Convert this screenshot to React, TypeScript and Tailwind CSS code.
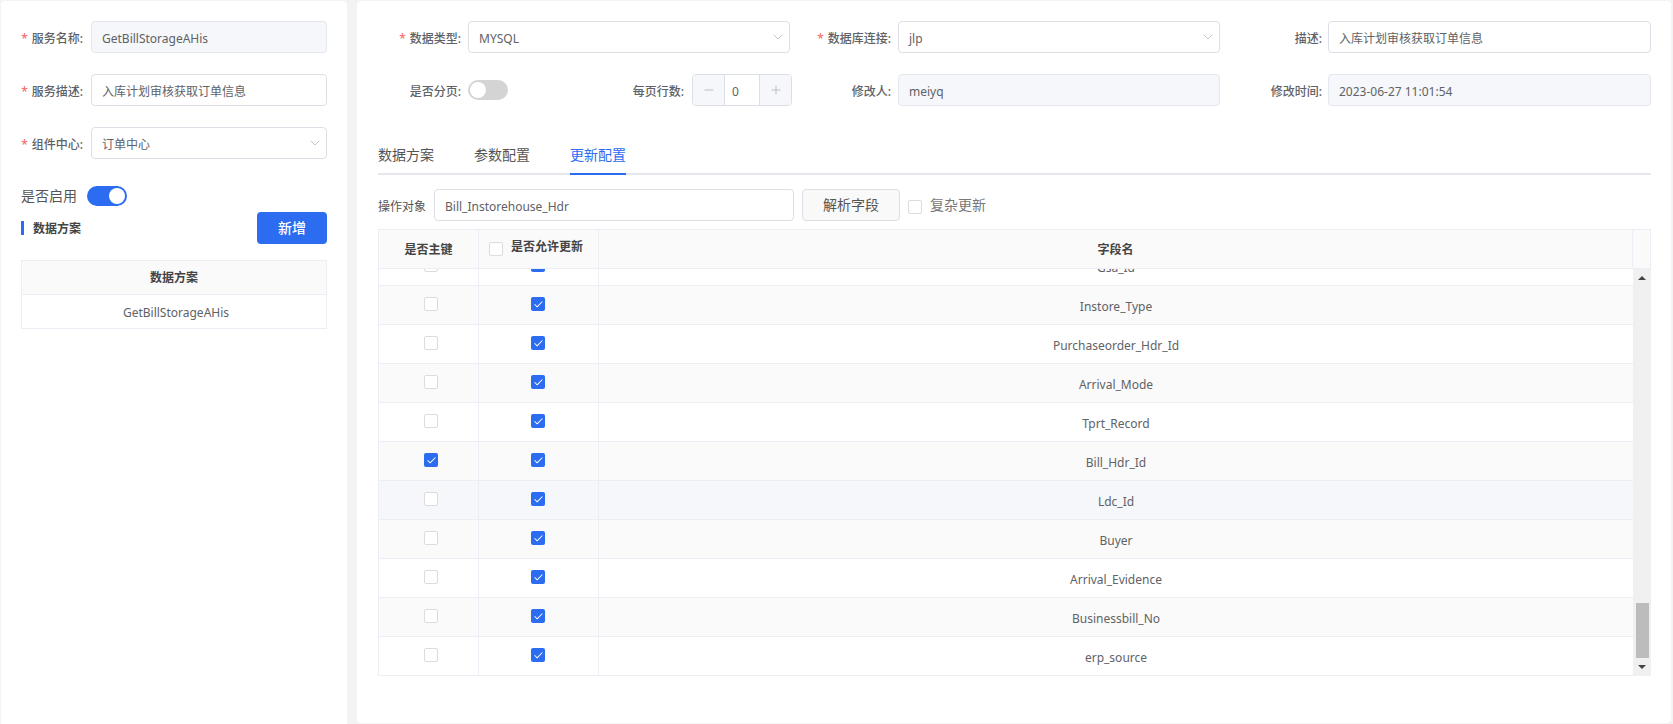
import React from 'react';
import { ChevronDown, Minus, Plus, Check } from 'lucide-react';

const rows = [
  { name: 'Gsa_Id', key: false },
  { name: 'Instore_Type', key: false },
  { name: 'Purchaseorder_Hdr_Id', key: false },
  { name: 'Arrival_Mode', key: false },
  { name: 'Tprt_Record', key: false },
  { name: 'Bill_Hdr_Id', key: true },
  { name: 'Ldc_Id', key: false },
  { name: 'Buyer', key: false },
  { name: 'Arrival_Evidence', key: false },
  { name: 'Businessbill_No', key: false },
  { name: 'erp_source', key: false },
];

function CheckBox({ checked }: { checked: boolean }) {
  if (checked) {
    return (
      <span className="flex h-[14px] w-[14px] items-center justify-center rounded-[2px] bg-[#2b6cf0]">
        <Check className="h-[11px] w-[11px] text-white" strokeWidth={2.2} />
      </span>
    );
  }
  return <span className="block h-[14px] w-[14px] rounded-[2px] border border-[#dcdcdc] bg-white" />;
}

function Label({ text, required, className }: { text: string; required?: boolean; className: string }) {
  return (
    <label className={`shrink-0 pt-[3px] text-right text-xs font-medium text-[#606266] ${className}`}>
      {required && <span className="mr-[4px] text-[#f56c6c]">*</span>}
      {text}:
    </label>
  );
}

function Field({ value, disabled, select, className }: { value: string; disabled?: boolean; select?: boolean; className: string }) {
  return (
    <div
      className={`flex h-8 items-center justify-between rounded border pl-[10px] pr-[3px] text-xs text-[#606266] ${
        disabled ? 'border-[#e4e7ed] bg-[#f5f7fa]' : 'border-[#dcdfe6] bg-white'
      } ${className}`}
    >
      <span className="pt-[3px]">{value}</span>
      {select && <ChevronDown className="h-4 w-4 text-[#b4b8bf]" strokeWidth={1.2} />}
    </div>
  );
}

function Toggle({ on }: { on: boolean }) {
  return (
    <span className={`flex h-5 w-10 items-center rounded-full px-[2px] ${on ? 'justify-end bg-[#2b6cf0]' : 'justify-start bg-[#d4d4d4]'}`}>
      <span className="block h-4 w-4 rounded-full bg-white" />
    </span>
  );
}

export default function App() {
  return (
    <div className="flex h-[724px] w-[1673px] gap-[10px] overflow-hidden bg-[#f3f3f4] pl-px pr-[2px] pt-px font-['Noto_Sans','Noto_Sans_CJK_SC',sans-serif]">
      {/* left panel */}
      <div className="h-[740px] w-[346px] shrink-0 rounded bg-white pl-5 pr-5 pt-5">
        <div className="flex flex-col gap-[21px]">
          <div className="flex items-center gap-2">
            <Label text="服务名称" required className="w-[62px]" />
            <Field value="GetBillStorageAHis" disabled className="w-[236px]" />
          </div>
          <div className="flex items-center gap-2">
            <Label text="服务描述" required className="w-[62px]" />
            <Field value="入库计划审核获取订单信息" className="w-[236px]" />
          </div>
          <div className="flex items-center gap-2">
            <Label text="组件中心" required className="w-[62px]" />
            <Field value="订单中心" select className="w-[236px]" />
          </div>
        </div>
        <div className="mt-[27px] flex items-center gap-[10px] text-sm text-[#555]">
          <span>是否启用</span>
          <Toggle on />
        </div>
        <div className="mt-[6px] flex items-center justify-between">
          <div className="border-l-[3px] border-[#2b6cf0] pl-[9px] text-xs font-semibold leading-[14px] text-[#444]">
            <span className="-mb-px mt-px block">数据方案</span>
          </div>
          <button className="h-8 w-[70px] rounded bg-[#2b6cf0] text-sm font-medium text-white">新增</button>
        </div>
        <div className="mt-4 w-[306px] border border-[#ebeef5] text-center text-xs">
          <div className="flex h-[34px] items-center justify-center border-b border-[#ebeef5] bg-[#fafafa] font-semibold text-[#444]">数据方案</div>
          <div className="flex h-[33px] items-center justify-center pl-[4px] pt-[2px] text-[#606266]">GetBillStorageAHis</div>
        </div>
      </div>

      {/* right panel */}
      <div className="h-[722px] w-[1314px] shrink-0 rounded bg-white pl-[21px] pr-5 pt-5">
        <div className="flex h-8 items-center">
          <Label text="数据类型" required className="w-[83px]" />
          <Field value="MYSQL" select className="ml-[7px] w-[322px]" />
          <Label text="数据库连接" required className="ml-[20px] w-[81px]" />
          <Field value="jlp" select className="ml-[7px] w-[322px]" />
          <Label text="描述" className="ml-[20px] w-[82px]" />
          <Field value="入库计划审核获取订单信息" className="ml-[6px] w-[323px]" />
        </div>
        <div className="mt-[21px] flex h-8 items-center">
          <Label text="是否分页" className="w-[83px]" />
          <div className="ml-[7px] w-[40px]"><Toggle on={false} /></div>
          <Label text="每页行数" className="ml-[117px] w-[59px]" />
          <div className="ml-[8px] flex h-8 w-[100px] items-stretch overflow-hidden rounded border border-[#dcdfe6] text-xs text-[#606266]">
            <span className="flex w-[32px] items-center justify-center border-r border-[#dcdfe6] bg-[#f5f7fa]"><Minus className="h-[14px] w-[14px] text-[#b4b8bf]" strokeWidth={1.5} /></span>
            <span className="flex flex-1 items-center pl-[7px] pt-[3px]">0</span>
            <span className="flex w-[32px] items-center justify-center border-l border-[#dcdfe6] bg-[#f5f7fa]"><Plus className="h-[14px] w-[14px] text-[#b4b8bf]" strokeWidth={1.5} /></span>
          </div>
          <Label text="修改人" className="ml-[20px] w-[79px]" />
          <Field value="meiyq" disabled className="ml-[7px] w-[322px]" />
          <Label text="修改时间" className="ml-[20px] w-[82px]" />
          <Field value="2023-06-27 11:01:54" disabled className="ml-[6px] w-[323px]" />
        </div>

        <div className="mt-[23px] flex h-[46px] gap-10 border-b-2 border-[#e4e7ed] pt-4 text-sm leading-5 text-[#555]">
          <span>数据方案</span>
          <span>参数配置</span>
          <span className="-mb-[2px] border-b-2 border-[#2b6cf0] text-[#2b6cf0]">更新配置</span>
        </div>

        <div className="mt-[14px] flex h-8 items-center">
          <span className="w-[56px] shrink-0 pt-[3px] text-xs text-[#555]">操作对象</span>
          <Field value="Bill_Instorehouse_Hdr" className="w-[360px]" />
          <button className="ml-2 h-8 w-[98px] rounded border border-[#dcdfe6] bg-[#f9f9f9] text-sm text-[#555]">解析字段</button>
          <span className="ml-2 mt-1"><CheckBox checked={false} /></span>
          <span className="ml-2 text-sm text-[#777]">复杂更新</span>
        </div>

        <div className="mt-2 w-[1273px] border-l border-t border-[#ebeef5] text-xs">
          <div className="flex h-[39px] border-b border-[#ebeef5] bg-[#fafafa] font-semibold text-[#444]">
            <div className="flex w-[100px] items-center justify-center border-r border-[#ebeef5] pt-[2px]">是否主键</div>
            <div className="flex w-[120px] items-center gap-2 border-r border-[#ebeef5] pl-[10px]">
              <CheckBox checked={false} />
              <span className="-mt-1">是否允许更新</span>
            </div>
            <div className="flex flex-1 items-center justify-center border-r border-[#ebeef5] pt-[2px]">字段名</div>
            <div className="w-[18px] shrink-0 border-r border-[#ebeef5]" />
          </div>
          <div className="flex h-[407px]">
            <div className="flex flex-1 flex-col justify-end overflow-hidden">
              {rows.map((row, i) => (
                <div
                  key={row.name}
                  className={`flex h-[39px] shrink-0 border-b border-[#ebeef5] text-[#606266] ${
                    row.name === 'Ldc_Id' ? 'bg-[#f5f7fa]' : i % 2 === 1 ? 'bg-[#fafafa]' : 'bg-white'
                  }`}
                >
                  <div className="flex w-[100px] items-center justify-center border-r border-[#ebeef5] pb-[2px] pl-[5px]"><CheckBox checked={row.key} /></div>
                  <div className="flex w-[120px] items-center justify-center border-r border-[#ebeef5] pb-[2px] pr-px"><CheckBox checked /></div>
                  <div className="flex flex-1 items-center justify-center pt-[3px]">{row.name}</div>
                </div>
              ))}
            </div>
            {/* scrollbar */}
            <div className="flex w-[18px] shrink-0 flex-col items-center justify-between bg-[#f0f0f0] pb-[7px] pt-[7px]">
              <span className="h-0 w-0 border-x-[4px] border-b-[4px] border-x-transparent border-b-[#444]" />
              <div className="flex w-full flex-1 flex-col items-center justify-end pb-[7px]">
                <span className="block h-[55px] w-[13px] bg-[#bcbcbc]" />
              </div>
              <span className="h-0 w-0 border-x-[4px] border-t-[4px] border-x-transparent border-t-[#444]" />
            </div>
          </div>
        </div>
      </div>
    </div>
  );
}
